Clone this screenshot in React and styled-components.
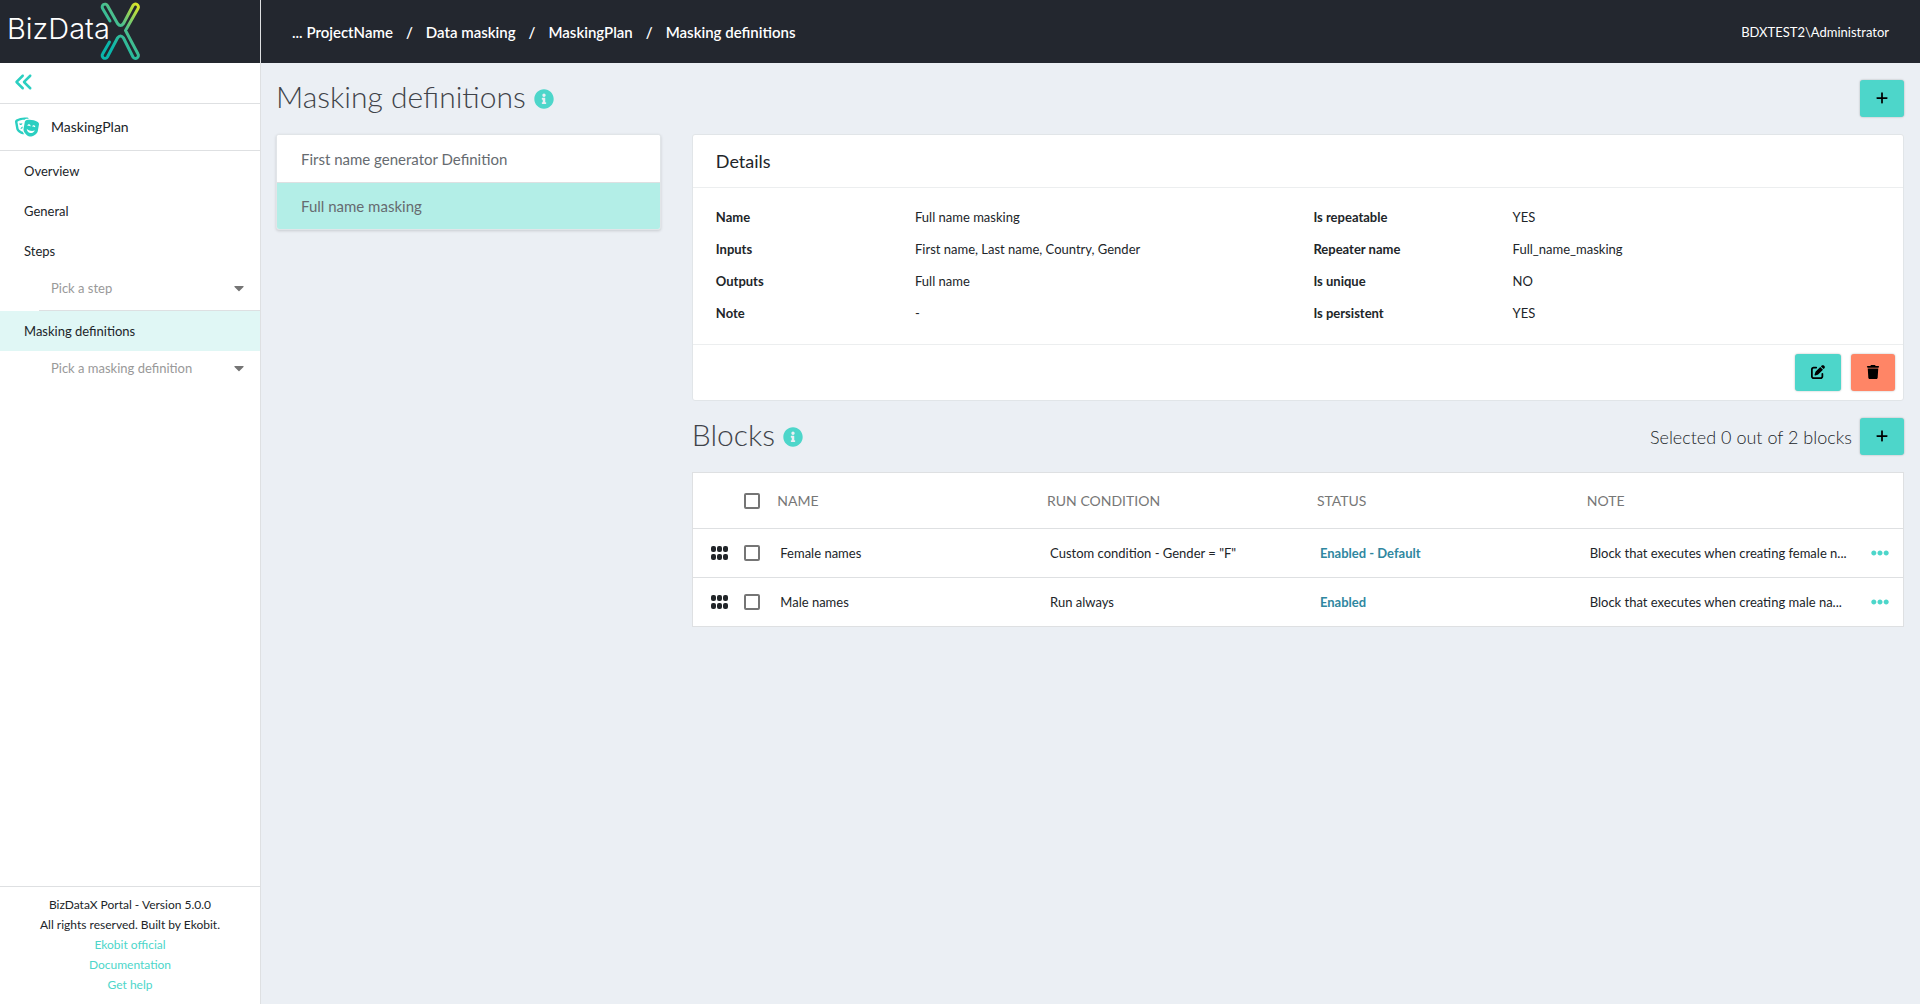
import React, { useState } from "react";
import styled, { createGlobalStyle } from "styled-components";
import { FaInfoCircle, FaTheaterMasks, FaCaretDown, FaEllipsisH } from "react-icons/fa";
import { FaAnglesLeft, FaPenToSquare, FaPlus, FaTrash } from "react-icons/fa6";

const details = [
  ["Name", "Full name masking", "Is repeatable", "YES"],
  ["Inputs", "First name, Last name, Country, Gender", "Repeater name", "Full_name_masking"],
  ["Outputs", "Full name", "Is unique", "NO"],
  ["Note", "-", "Is persistent", "YES"],
];

const blocks = [
  {
    name: "Female names",
    condition: 'Custom condition - Gender = "F"',
    status: "Enabled - Default",
    note: "Block that executes when creating female n...",
  },
  {
    name: "Male names",
    condition: "Run always",
    status: "Enabled",
    note: "Block that executes when creating male na...",
  },
];

const definitions = ["First name generator Definition", "Full name masking"];

function Logo() {
  return (
    <LogoLink href="#" aria-label="BizDataX">
      <svg width="144" height="63" viewBox="0 0 144 63">
        <defs>
          <linearGradient id="logoX" gradientUnits="userSpaceOnUse" x1="136" y1="4" x2="100" y2="34">
            <stop offset="0" stopColor="#d5e32b" />
            <stop offset="0.5" stopColor="#4dbf8c" />
            <stop offset="1" stopColor="#0ab5ab" />
          </linearGradient>
        </defs>
        <text x="7" y="39" fontFamily="Inter, sans-serif" fontWeight="300" fontSize="29" fill="#fff">
          BizData
        </text>
        <path
          d="M110 21 L102.6 8.5 A2.8 2.8 0 0 1 107.4 5.5 L117.5 23.5 Q120.5 27.5 123.5 23.5 L133 5.5 A2.8 2.8 0 0 1 138 8.5 L125.5 30.5 L138 54 A2.8 2.8 0 0 1 133 57 L123.5 38 Q120.5 34 117.5 38 L107.4 57 A2.8 2.8 0 0 1 102.6 54 L109.5 42"
          fill="none"
          stroke="url(#logoX)"
          strokeWidth="3"
          strokeLinecap="round"
          strokeLinejoin="round"
        />
      </svg>
    </LogoLink>
  );
}

function DragHandle() {
  return (
    <HandleIcon width="19" height="14" viewBox="0 0 19 14">
      {[1, 7, 13].map((x) => (
        <React.Fragment key={x}>
          <rect x={x} y="0" width="5" height="6" rx="2" />
          <rect x={x} y="8" width="5" height="6" rx="2" />
        </React.Fragment>
      ))}
    </HandleIcon>
  );
}

function App() {
  const [selected, setSelected] = useState([]);
  const [active, setActive] = useState(1);

  const toggleBlock = (name) => {
    setSelected(selected.includes(name) ? selected.filter((n) => n !== name) : [...selected, name]);
  };

  const toggleAll = () => {
    setSelected(selected.length === blocks.length ? [] : blocks.map((b) => b.name));
  };

  return (
    <Page>
      <GlobalStyle />
      <Sidebar>
        <LogoBar>
          <Logo />
        </LogoBar>
        <CollapseRow>
          <IconButton type="button" aria-label="Collapse menu">
            <FaAnglesLeft size={20} />
          </IconButton>
        </CollapseRow>
        <PlanRow>
          <FaTheaterMasks size={24} color="#2bcfc1" />
          MaskingPlan
        </PlanRow>
        <Nav>
          <NavLink href="#">Overview</NavLink>
          <NavLink href="#">General</NavLink>
          <NavLink href="#">Steps</NavLink>
          <PickerRow $divider>
            <Picker aria-label="Pick a step" defaultValue="">
              <option value="">Pick a step</option>
            </Picker>
            <FaCaretDown size={16} />
          </PickerRow>
          <NavLink href="#" $active>
            Masking definitions
          </NavLink>
          <PickerRow>
            <Picker aria-label="Pick a masking definition" defaultValue="">
              <option value="">Pick a masking definition</option>
            </Picker>
            <FaCaretDown size={16} />
          </PickerRow>
        </Nav>
        <Footer>
          <span>BizDataX Portal - Version 5.0.0</span>
          <span>All rights reserved. Built by Ekobit.</span>
          <FooterLink href="#">Ekobit official</FooterLink>
          <FooterLink href="#">Documentation</FooterLink>
          <FooterLink href="#">Get help</FooterLink>
        </Footer>
      </Sidebar>

      <Content>
        <TopBar>
          <Crumbs aria-label="Breadcrumb">
            <a href="#">... ProjectName</a>
            <span>/</span>
            <a href="#">Data masking</a>
            <span>/</span>
            <a href="#">MaskingPlan</a>
            <span>/</span>
            <a href="#">Masking definitions</a>
          </Crumbs>
          <User>BDXTEST2\Administrator</User>
        </TopBar>

        <Main>
          <TitleRow>
            <Title>Masking definitions</Title>
            <FaInfoCircle size={20} color="#4dd6ca" />
            <Spacer />
            <Button type="button" aria-label="Add masking definition">
              <FaPlus size={14} />
            </Button>
          </TitleRow>

          <Columns>
            <DefinitionList>
              {definitions.map((name, i) => (
                <DefinitionItem key={name} type="button" $active={i === active} onClick={() => setActive(i)}>
                  {name}
                </DefinitionItem>
              ))}
            </DefinitionList>

            <div>
              <Card>
                <CardHeader>Details</CardHeader>
                <DetailsGrid>
                  {details.map(([label, value, label2, value2]) => (
                    <React.Fragment key={label}>
                      <dt>{label}</dt>
                      <dd>{value}</dd>
                      <dt>{label2}</dt>
                      <dd>{value2}</dd>
                    </React.Fragment>
                  ))}
                </DetailsGrid>
                <CardFooter>
                  <Button type="button" $wide aria-label="Edit">
                    <FaPenToSquare size={14} />
                  </Button>
                  <Button type="button" $variant="danger" aria-label="Delete">
                    <FaTrash size={14} />
                  </Button>
                </CardFooter>
              </Card>

              <BlocksRow>
                <Title>Blocks</Title>
                <FaInfoCircle size={20} color="#4dd6ca" />
                <Spacer />
                <SelectedText>
                  Selected {selected.length} out of {blocks.length} blocks
                </SelectedText>
                <Button type="button" aria-label="Add block">
                  <FaPlus size={14} />
                </Button>
              </BlocksRow>

              <Table>
                <colgroup>
                  <col width="50" />
                  <col width="32" />
                  <col />
                  <col />
                  <col />
                  <col />
                  <col width="50" />
                </colgroup>
                <thead>
                  <tr>
                    <th />
                    <CheckHead>
                      <Checkbox
                        type="checkbox"
                        aria-label="Select all blocks"
                        checked={selected.length === blocks.length}
                        onChange={toggleAll}
                      />
                    </CheckHead>
                    <th>NAME</th>
                    <th>RUN CONDITION</th>
                    <th>STATUS</th>
                    <th>NOTE</th>
                    <th />
                  </tr>
                </thead>
                <tbody>
                  {blocks.map((block) => (
                    <tr key={block.name}>
                      <HandleCell>
                        <DragHandle />
                      </HandleCell>
                      <CheckCell>
                        <Checkbox
                          type="checkbox"
                          aria-label={block.name}
                          checked={selected.includes(block.name)}
                          onChange={() => toggleBlock(block.name)}
                        />
                      </CheckCell>
                      <td>{block.name}</td>
                      <td>{block.condition}</td>
                      <td>
                        <Status>{block.status}</Status>
                      </td>
                      <td>{block.note}</td>
                      <MenuCell>
                        <IconButton type="button" aria-label="More" $light>
                          <FaEllipsisH size={18} />
                        </IconButton>
                      </MenuCell>
                    </tr>
                  ))}
                </tbody>
              </Table>
            </div>
          </Columns>
        </Main>
      </Content>
    </Page>
  );
}

export default App;

const GlobalStyle = createGlobalStyle`
  * {
    box-sizing: border-box;
  }

  body {
    margin: 0;
    font-family: Lato, "Open Sans", sans-serif;
    font-size: 13px;
    line-height: 20px;
    color: #212529;
    background: #ebeff4;
  }

  a {
    color: inherit;
    text-decoration: none;
  }

  button, select {
    font: inherit;
  }
`;

const Page = styled.div`
  display: flex;
  min-height: 100vh;
`;

const Sidebar = styled.aside`
  display: flex;
  flex-direction: column;
  flex: 0 0 261px;
  background: #fff;
  border-right: 1px solid #dee0e2;
`;

const LogoBar = styled.div`
  height: 63px;
  background: #23272f;
`;

const LogoLink = styled.a`
  display: block;
  height: 63px;
`;

const CollapseRow = styled.div`
  display: flex;
  align-items: center;
  height: 41px;
  padding: 0 14px 2px;
  border-bottom: 1px solid #dee0e2;
`;

const IconButton = styled.button`
  display: flex;
  align-items: center;
  padding: 0;
  border: none;
  background: none;
  color: ${(props) => (props.$light ? "#4dd6ca" : "#2bcfc1")};
  cursor: pointer;
`;

const PlanRow = styled.div`
  display: flex;
  align-items: center;
  gap: 12px;
  height: 47px;
  padding: 0 15px;
  border-bottom: 1px solid #dee0e2;
  font-size: 14px;
`;

const Nav = styled.nav`
  display: flex;
  flex-direction: column;
  flex: 1;
`;

const NavLink = styled.a`
  padding: 10px 24px;
  background: ${(props) => (props.$active ? "#e0f7f5" : "transparent")};
`;

const PickerRow = styled.div`
  display: flex;
  align-items: center;
  height: 40px;
  margin-left: 39px;
  padding: 0 13px 6px 12px;
  border-bottom: 1px solid ${(props) => (props.$divider ? "#dee0e2" : "transparent")};
  color: #757575;
`;

const Picker = styled.select`
  flex: 1;
  padding: 0;
  border: none;
  background: none;
  appearance: none;
  color: #999;
`;

const Footer = styled.footer`
  display: flex;
  flex-direction: column;
  align-items: center;
  padding: 8px 0 9px;
  border-top: 1px solid #dee0e2;
  font-size: 12px;
`;

const FooterLink = styled.a`
  color: #4dd6ca;
`;

const Content = styled.div`
  flex: 1;
  min-width: 0;
`;

const TopBar = styled.header`
  display: flex;
  align-items: center;
  justify-content: space-between;
  height: 63px;
  padding: 0 31px;
  background: #23272f;
  color: #fff;
`;

const Crumbs = styled.nav`
  display: flex;
  gap: 13px;
  font-size: 15px;
  font-weight: 600;
`;

const User = styled.span`
  font-size: 13px;
`;

const Main = styled.main`
  padding: 17px 16px 17px 15px;
`;

const TitleRow = styled.div`
  display: flex;
  align-items: center;
  gap: 8px;
  height: 37px;
`;

const BlocksRow = styled(TitleRow)`
  margin: 17px 0;
`;

const Title = styled.h1`
  margin: 0;
  padding-bottom: 6px;
  font-size: 30px;
  font-weight: 300;
  line-height: 36px;
  color: #3f4349;
`;

const Spacer = styled.div`
  flex: 1;
`;

const Button = styled.button`
  display: flex;
  align-items: center;
  justify-content: center;
  width: ${(props) => (props.$wide ? "46px" : "44px")};
  height: 37px;
  padding: 0 0 2px;
  border: none;
  border-radius: 3px;
  background: ${(props) => (props.$variant === "danger" ? "#ff8566" : "#4dd6ca")};
  box-shadow: 0 0 2px rgba(0, 0, 0, 0.3);
  color: #000;
  cursor: pointer;
`;

const Columns = styled.div`
  display: grid;
  grid-template-columns: minmax(0, 100fr) minmax(0, 315fr);
  align-items: start;
  gap: 31px;
  margin-top: 17px;
`;

const Card = styled.section`
  border: 1px solid #e1e5e8;
  border-radius: 3px;
  background: #fff;
  overflow: hidden;
`;

const DefinitionList = styled(Card)`
  box-shadow: 0 1px 3px rgba(0, 0, 0, 0.15);
`;

const DefinitionItem = styled.button`
  display: block;
  width: 100%;
  height: 47px;
  padding: 0 24px;
  border: none;
  background: ${(props) => (props.$active ? "#b3eee7" : "#fff")};
  color: #666b70;
  font-size: 15px;
  text-align: left;
  cursor: pointer;

  & + & {
    border-top: 1px solid #dee0e2;
  }
`;

const CardHeader = styled.h2`
  margin: 0;
  padding: 16px 23px;
  border-bottom: 1px solid #eceeef;
  font-size: 18px;
  font-weight: 400;
`;

const DetailsGrid = styled.dl`
  display: grid;
  grid-template-columns: 1fr 2fr 1fr 2fr;
  row-gap: 12px;
  margin: 0 -8px 0 0;
  padding: 19px 0 21px 23px;

  dt {
    font-weight: 700;
  }

  dd {
    margin: 0;
  }
`;

const CardFooter = styled.div`
  display: flex;
  justify-content: flex-end;
  gap: 10px;
  padding: 9px 8px;
  border-top: 1px solid #eceeef;
`;

const SelectedText = styled.span`
  font-size: 18px;
  font-weight: 300;
`;

const Table = styled.table`
  width: 100%;
  table-layout: fixed;
  border-collapse: collapse;
  border: 1px solid #dee0e2;
  background: #fff;

  th {
    height: 56px;
    padding: 0 3px;
    color: #777;
    font-size: 14px;
    font-weight: 400;
    text-align: left;
  }

  td {
    height: 49px;
    padding: 0 6px;
    border-top: 1px solid #dee0e2;
    white-space: nowrap;
  }
`;

const HandleCell = styled.td`
  && {
    padding: 0 17px;
  }
`;

const HandleIcon = styled.svg`
  display: block;
  fill: #212529;
`;

const CheckHead = styled.th`
  && {
    padding: 0 2px;
  }
`;

const CheckCell = styled.td`
  && {
    padding: 0 2px;
  }
`;

const MenuCell = styled.td`
  && {
    padding: 0 17px;
  }
`;

const Checkbox = styled.input`
  display: block;
  width: 16px;
  height: 16px;
  margin: 0;
  border: 2px solid #757575;
  border-radius: 2px;
  appearance: none;

  &:checked {
    border-color: #2bcfc1;
    background: #2bcfc1;
  }
`;

const Status = styled.span`
  color: #2f87a0;
  font-weight: 700;
`;
